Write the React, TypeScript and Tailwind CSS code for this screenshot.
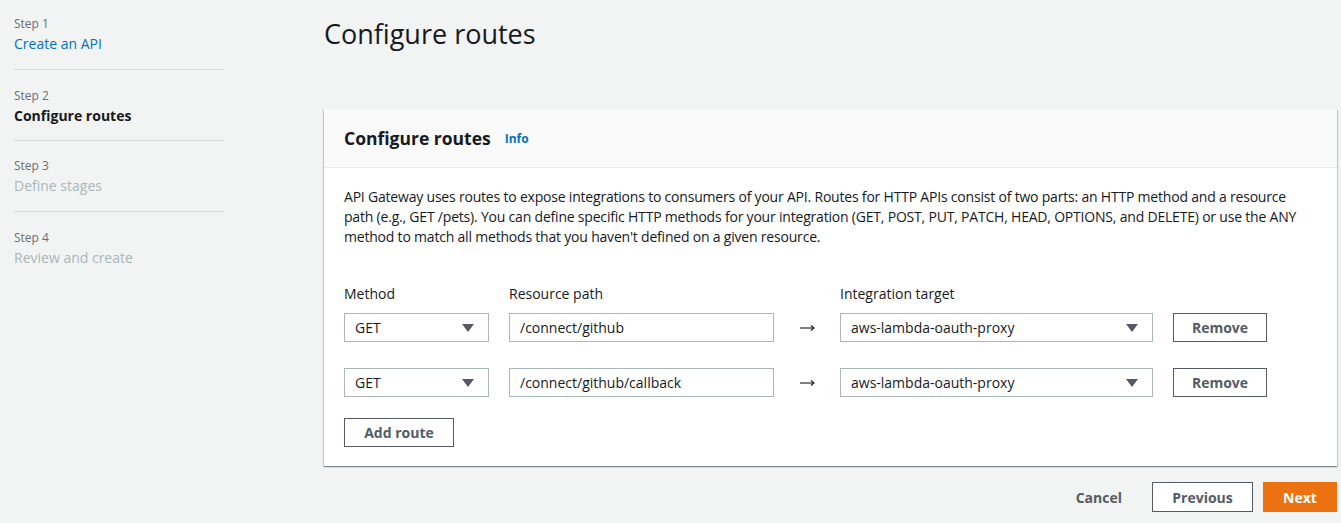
import React from 'react'

const font = { fontFamily: '"Open Sans", "Noto Sans", sans-serif' }

function Caret() {
  return (
    <svg width="12" height="8" viewBox="0 0 12 8" className="shrink-0">
      <path d="M0 0 H12 L6 8 Z" fill="#545b64" />
    </svg>
  )
}

function Arrow() {
  return (
    <svg width="15" height="8" viewBox="0 0 15 8" fill="none" stroke="#16191f" strokeWidth="1.1">
      <path d="M0 4 H14" />
      <path d="M11 1.5 L14 4 L11 6.5" />
    </svg>
  )
}

function Select({ value, width }: { value: string; width: string }) {
  return (
    <div className={`${width} h-[29px] flex items-center justify-between border border-[#aab7b8] bg-white pl-[10px] pr-[14px] text-[14px] text-[#16191f]`}>
      <span>{value}</span>
      <Caret />
    </div>
  )
}

function Step({ n, label, state }: { n: number; label: string; state: 'done' | 'active' | 'todo' }) {
  const cls =
    state === 'done'
      ? 'text-[#0073bb]'
      : state === 'active'
        ? 'text-[#16191f] font-bold'
        : 'text-[#aab7b8]'
  return (
    <div className="flex flex-col">
      <span className="text-[12px] leading-[16px] text-[#687078]">Step {n}</span>
      <span className={`text-[14px] leading-[22px] mt-[1px] ${cls}`}>{label}</span>
    </div>
  )
}

function Route({ path }: { path: string }) {
  return (
    <div className="flex items-center">
      <Select value="GET" width="w-[145px]" />
      <div className="ml-[20px] w-[265px] h-[29px] flex items-center border border-[#aab7b8] bg-white px-[10px] text-[14px] text-[#16191f]">
        {path}
      </div>
      <span className="w-[66px] flex justify-center">
        <Arrow />
      </span>
      <Select value="aws-lambda-oauth-proxy" width="w-[313px]" />
      <button className="ml-[20px] w-[94px] h-[29px] border border-[#545b64] bg-white text-[14px] font-bold text-[#545b64]">
        Remove
      </button>
    </div>
  )
}

export default function App() {
  return (
    <div className="w-[1341px] h-[523px] bg-[#f2f3f3] flex overflow-hidden" style={font}>
      {/* steps */}
      <nav className="w-[210px] ml-[14px] pt-[16px] flex flex-col">
        <Step n={1} label="Create an API" state="done" />
        <div className="border-t border-[#d5dbdb] mt-[14px] mb-[18px]" />
        <Step n={2} label="Configure routes" state="active" />
        <div className="border-t border-[#d5dbdb] mt-[13px] mb-[17px]" />
        <Step n={3} label="Define stages" state="todo" />
        <div className="border-t border-[#d5dbdb] mt-[14px] mb-[18px]" />
        <Step n={4} label="Review and create" state="todo" />
      </nav>

      {/* main */}
      <main className="ml-[100px] w-[1013px] flex flex-col">
        <h1 className="text-[27px] leading-[36px] mt-[16px] text-[#16191f] font-normal">Configure routes</h1>

        <section className="mt-[57px] bg-white shadow-[0_1px_1px_0_rgba(0,28,36,0.3),1px_1px_1px_0_rgba(0,28,36,0.15),-1px_1px_1px_0_rgba(0,28,36,0.15)]">
          <header className="h-[59px] bg-[#fafafa] border-b border-[#eaeded] px-[20px] flex items-center gap-[14px]">
            <h2 className="text-[17.5px] font-bold text-[#16191f]">Configure routes</h2>
            <span className="text-[12px] font-bold text-[#0073bb] mt-[2px]">Info</span>
          </header>
          <div className="px-[20px] pt-[19px] pb-[19px]">
            <p className="text-[14px] leading-[20px] tracking-[-0.2px] text-[#16191f]">
              API Gateway uses routes to expose integrations to consumers of your API. Routes for HTTP APIs consist of two parts: an HTTP method and a resource path (e.g., GET /pets). You can define specific HTTP methods for your integration (GET, POST, PUT, PATCH, HEAD, OPTIONS, and DELETE) or use the ANY method to match all methods that you haven't defined on a given resource.
            </p>

            <div className="mt-[37px] flex text-[14px] leading-[20px] text-[#16191f]">
              <span className="w-[165px]">Method</span>
              <span className="w-[331px]">Resource path</span>
              <span>Integration target</span>
            </div>
            <div className="mt-[9px] flex flex-col gap-[26px]">
              <Route path="/connect/github" />
              <Route path="/connect/github/callback" />
            </div>
            <button className="mt-[21px] w-[110px] h-[29px] border border-[#545b64] bg-white text-[14px] font-bold text-[#545b64]">
              Add route
            </button>
          </div>
        </section>

        <div className="mt-[16px] flex items-center justify-end gap-[10px]">
          <button className="px-[20px] h-[29px] text-[14px] font-bold text-[#545b64]">Cancel</button>
          <button className="w-[101px] h-[30px] border border-[#545b64] bg-white text-[14px] font-bold text-[#545b64]">
            Previous
          </button>
          <button className="w-[74px] h-[30px] bg-[#ec7211] text-[14px] font-bold text-white">Next</button>
        </div>
      </main>
    </div>
  )
}
